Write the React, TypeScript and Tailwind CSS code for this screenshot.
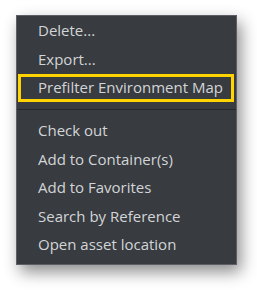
const itemsTop = ['Delete...', 'Export...'];
const itemsBottom = ['Check out', 'Add to Container(s)', 'Add to Favorites', 'Search by Reference', 'Open asset location'];

function Item({ label }: { label: string }) {
  return (
    <div className="h-[28.5px] flex items-center pl-[21px] text-[15px] text-[#d2d5d8] leading-none">
      {label}
    </div>
  );
}

export default function App() {
  return (
    <div className="w-[257px] h-[290px] bg-white pt-[15px] pl-[16px]" style={{ fontFamily: '"Open Sans", "Noto Sans", sans-serif' }}>
      <div className="w-[221px] h-[250px] bg-[#383b3f] border border-[#5c5f63] pt-[0.5px] shadow-[4px_7px_15px_rgba(0,0,0,0.45)]">
        {itemsTop.map((t) => (
          <Item key={t} label={t} />
        ))}
        <div className="h-[28.5px] ml-[1px] mr-[2px] border-[3px] border-[#ffd400] flex items-center pl-[17px] text-[15px] text-[#d2d5d8] leading-none">
          Prefilter Environment Map
        </div>
        <div className="h-[14.25px] flex items-center">
          <div className="w-full h-px bg-[#26282b]" />
        </div>
        {itemsBottom.map((t) => (
          <Item key={t} label={t} />
        ))}
      </div>
    </div>
  );
}
